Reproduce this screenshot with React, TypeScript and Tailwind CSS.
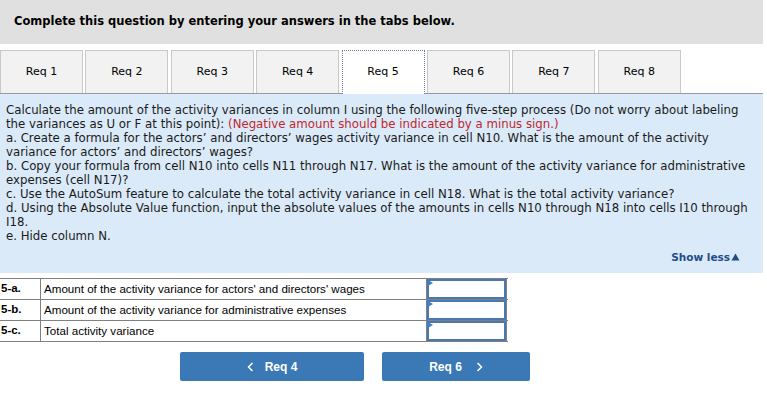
import React from "react";

const tabs = ["Req 1", "Req 2", "Req 3", "Req 4", "Req 5", "Req 6", "Req 7", "Req 8"];

const rows = [
  { label: "5-a.", text: "Amount of the activity variance for actors' and directors' wages" },
  { label: "5-b.", text: "Amount of the activity variance for administrative expenses" },
  { label: "5-c.", text: "Total activity variance" },
];

export default function App() {
  return (
    <div className="w-[767px] h-[394px] bg-white overflow-hidden" style={{ fontFamily: '"DejaVu Sans", Verdana, sans-serif' }}>
      <div className="w-[763px]">
        <div className="h-[44px] bg-[#e0e0e0] flex items-center pl-[14px] pb-[1px]">
          <span className="font-bold text-[11.5px] text-black">Complete this question by entering your answers in the tabs below.</span>
        </div>
        <div className="mt-[6px] flex border-b border-[#9a9a9a] h-[44px]">
          <div className="flex gap-[2.4px]">
            {tabs.map((t) =>
              t === "Req 5" ? (
                <div
                  key={t}
                  className="w-[83px] h-[44px] -mb-px bg-white border border-dotted border-b-0 border-[#6b7a99] flex items-center justify-center text-[11px] text-black"
                >
                  {t}
                </div>
              ) : (
                <div
                  key={t}
                  className="w-[83px] h-[43px] bg-[#f2f2f2] border border-b-0 border-[#c9c9c9] flex items-center justify-center text-[11px] text-black"
                >
                  {t}
                </div>
              )
            )}
          </div>
        </div>
        <div className="bg-[#dbeaf8] pt-[9px] pl-[6px] pr-[6px] h-[179px] text-[11.75px] leading-[14px] text-[#1a1a1a]">
          <div className="whitespace-nowrap">Calculate the amount of the activity variances in column I using the following five-step process (Do not worry about labeling</div>
          <div className="whitespace-nowrap">
            the variances as U or F at this point): <span className="text-[#c1272d]">(Negative amount should be indicated by a minus sign.)</span>
          </div>
          <div className="whitespace-nowrap">a. Create a formula for the actors’ and directors’ wages activity variance in cell N10. What is the amount of the activity</div>
          <div className="whitespace-nowrap">variance for actors’ and directors’ wages?</div>
          <div className="whitespace-nowrap">b. Copy your formula from cell N10 into cells N11 through N17. What is the amount of the activity variance for administrative</div>
          <div className="whitespace-nowrap">expenses (cell N17)?</div>
          <div className="whitespace-nowrap">c. Use the AutoSum feature to calculate the total activity variance in cell N18. What is the total activity variance?</div>
          <div className="whitespace-nowrap">d. Using the Absolute Value function, input the absolute values of the amounts in cells N10 through N18 into cells I10 through</div>
          <div className="whitespace-nowrap">I18.</div>
          <div className="whitespace-nowrap">e. Hide column N.</div>
          <div className="flex justify-end mt-[7px] pr-[17px]">
            <span className="font-bold text-[10.5px] text-[#1f4d8a] flex items-center">
              Show less
              <svg width="9" height="8" viewBox="0 0 9 8" className="ml-[1px]">
                <path d="M0.5 7.5 L4.5 0.5 L8.5 7.5 Z" fill="#1f4d8a" />
              </svg>
            </span>
          </div>
        </div>
        <div className="mt-[5px] w-[508px] border-t border-[#808080]" style={{ fontFamily: '"Liberation Sans", Arial, sans-serif' }}>
          {rows.map((r) => (
            <div key={r.label} className="flex h-[21px] border-b border-[#808080]">
              <div className="w-[41px] pl-[1px] flex items-center font-bold text-[11.5px] text-black border-r border-[#808080]">{r.label}</div>
              <div className="w-[386px] pl-[3px] flex items-center text-[11.6px] text-black border-r border-[#808080]">{r.text}</div>
              <div className="relative w-[80px] border-r border-[#808080] bg-white">
                <div className="absolute inset-0 border-2 border-[#4a78b2]" />
                <svg width="5" height="6" viewBox="0 0 5 6" className="absolute left-[1px] top-[1px]">
                  <path d="M0 0 L5 3 L0 6 Z" fill="#3f7fd0" />
                </svg>
              </div>
            </div>
          ))}
        </div>
        <div className="mt-[10px] flex pl-[180px] gap-[18px]" style={{ fontFamily: '"Liberation Sans", Arial, sans-serif' }}>
          <button className="w-[184px] h-[29px] rounded-[2px] bg-[#3b78b6] text-white font-bold text-[12px] flex items-center justify-center">
            <svg width="7" height="10" viewBox="0 0 7 10" className="mr-[11px]">
              <path d="M5.5 1 L1.5 5 L5.5 9" stroke="white" strokeWidth="1.5" fill="none" />
            </svg>
            Req 4
          </button>
          <button className="w-[148px] h-[29px] rounded-[2px] bg-[#3b78b6] text-white font-bold text-[12px] flex items-center justify-center">
            Req 6
            <svg width="7" height="10" viewBox="0 0 7 10" className="ml-[14px]">
              <path d="M1.5 1 L5.5 5 L1.5 9" stroke="white" strokeWidth="1.5" fill="none" />
            </svg>
          </button>
        </div>
      </div>
    </div>
  );
}
